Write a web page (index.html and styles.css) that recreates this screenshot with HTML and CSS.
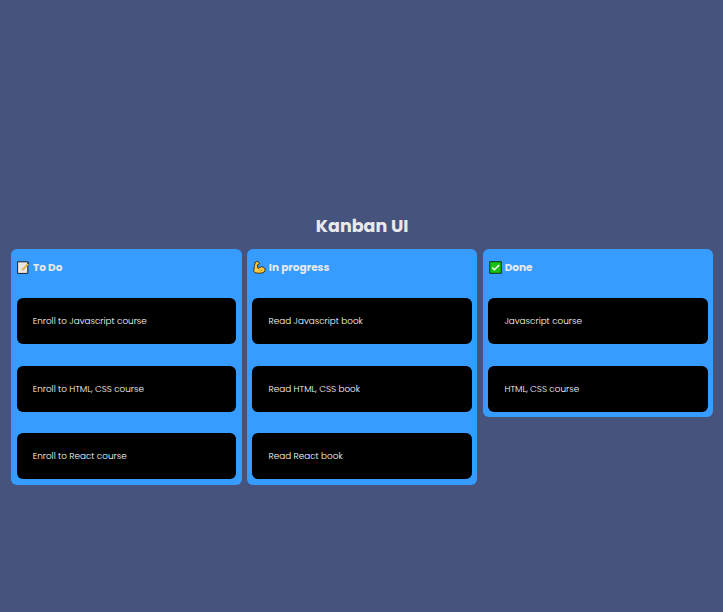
FILE: index.html
```html
<!DOCTYPE html>
<html lang="en">
<head>
<meta charset="utf-8">
<title>Kanban UI</title>
<link rel="stylesheet" href="styles.css">
</head>
<body>
<main class="app">
  <h1 class="title">Kanban UI</h1>
  <div class="board">
    <section class="column">
      <h2 class="heading todo">
        <svg class="icon" viewBox="0 0 13 13"><path d="M.6.8h10.2v11.6H.6z" fill="#eee9df" stroke="#17202b"/><path d="M2.4 3.5h5M2.4 5.5h4M2.4 7.5h3" stroke="#dcdcda" stroke-width=".5"/><path d="M5 9.6l.6-2 5-5.3 1.1 1.1-5 5.3z" fill="#f6bd35" stroke="#9b8347" stroke-width=".3"/><path d="M10.1 2.2l.9-1 1.7.6-1.2 1.6z" fill="#39414b"/></svg>
        <span>To Do</span>
      </h2>
      <div class="card"><span>Enroll to Javascript course</span></div>
      <div class="card"><span>Enroll to HTML, CSS course</span></div>
      <div class="card"><span>Enroll to React course</span></div>
    </section>
    <section class="column">
      <h2 class="heading progress">
        <svg class="icon" viewBox="0 0 13 13"><path d="M2.4 1Q3.5.2 4.9.8l1.4 1.1q.4 1-.6 1.8l-1.3.2.3 3q.9 1 1.8-.2 2-1.7 4-.5 2 1.2 1.5 3.4-.5 1.8-2.7 2.3-4 .9-7.3-.2Q.3 10.7.8 8.5 1.4 4 2.4 1z" fill="#ffc83d" stroke="#2b2618" stroke-width=".9"/><path d="M6.2 9q1.6 1.1 3.1.1" fill="none" stroke="#98762a" stroke-width=".5"/></svg>
        <span>In progress</span>
      </h2>
      <div class="card"><span>Read Javascript book</span></div>
      <div class="card"><span>Read HTML, CSS book</span></div>
      <div class="card"><span>Read React book</span></div>
    </section>
    <section class="column">
      <h2 class="heading done">
        <svg class="icon" viewBox="0 0 13 13"><path d="M.7.7h11.6v11.6H.7z" fill="#10c611" stroke="#122d18"/><path d="M3.2 6.6l2.3 2.2 4.6-4.9" fill="none" stroke="#fff" stroke-width="1.4"/></svg>
        <span>Done</span>
      </h2>
      <div class="card"><span>Javascript course</span></div>
      <div class="card"><span>HTML, CSS course</span></div>
    </section>
  </div>
</main>
</body>
</html>
```
FILE: styles.css
```css
* { box-sizing: border-box; }

body {
  margin: 0;
  min-height: 100vh;
  background: #45537d;
  color: #e9e9e9;
  font-family: Poppins, Inter, sans-serif;
}

.app { padding: 213px 9.8px 0 11.2px; }

.title {
  margin: 0;
  height: 36.4px;
  font-size: 17.5px;
  line-height: 27px;
  font-weight: 700;
  text-align: center;
}

.board {
  display: grid;
  grid-template-columns: repeat(3, 1fr);
  align-items: start;
  gap: 5.5px;
}

.column {
  display: flex;
  flex-direction: column;
  gap: 21.7px;
  padding: 5.4px;
  border-radius: 6px;
  background: #379cff;
}

.heading {
  display: flex;
  align-items: center;
  gap: 3px;
  height: 21.5px;
  margin: 0;
  padding-top: 4px;
  font-size: 10.5px;
  line-height: 16px;
  font-weight: 700;
}

.icon { width: 13px; height: 13px; margin-left: .4px; }

.card {
  display: flex;
  align-items: center;
  height: 46px;
  padding-left: 16.2px;
  border-radius: 6px;
  background: #000;
  color: #fff;
  font-size: 8.82px;
  font-weight: 300;
  line-height: 14px;
  white-space: nowrap;
}
```
